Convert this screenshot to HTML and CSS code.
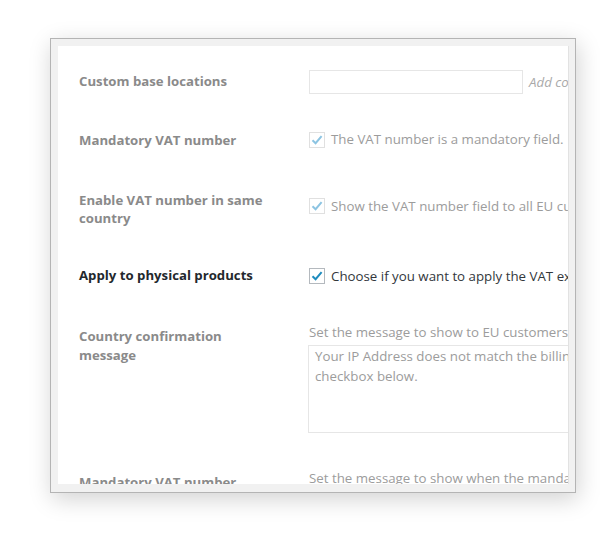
FILE: index.html
```html
<!DOCTYPE html>
<html>
<head>
<meta charset="utf-8">
<link rel="stylesheet" href="styles.css">
</head>
<body>
<div class="frame">
  <div class="panel">
    <div class="row r1">
      <div class="label">Custom base locations</div>
      <div class="field">
        <input class="text" type="text">
        <span class="hint">Add countries</span>
      </div>
    </div>
    <div class="row r2">
      <div class="label">Mandatory VAT number</div>
      <div class="field check">
        <span class="box"><svg viewBox="0 0 16 16" width="16" height="16"><path d="M3.5 8.2 L6.6 11.2 L12.6 4.2" fill="none" stroke-width="2"/></svg></span>
        <span class="ctext">The VAT number is a mandatory field.</span>
      </div>
    </div>
    <div class="row r3">
      <div class="label">Enable VAT number in same country</div>
      <div class="field check">
        <span class="box"><svg viewBox="0 0 16 16" width="16" height="16"><path d="M3.5 8.2 L6.6 11.2 L12.6 4.2" fill="none" stroke-width="2"/></svg></span>
        <span class="ctext">Show the VAT number field to all EU customers</span>
      </div>
    </div>
    <div class="row r4 active">
      <div class="label">Apply to physical products</div>
      <div class="field check">
        <span class="box"><svg viewBox="0 0 16 16" width="16" height="16"><path d="M3.5 8.2 L6.6 11.2 L12.6 4.2" fill="none" stroke-width="2"/></svg></span>
        <span class="ctext">Choose if you want to apply the VAT exemption</span>
      </div>
    </div>
    <div class="row r5">
      <div class="label">Country confirmation message</div>
      <div class="field">
        <div class="desc">Set the message to show to EU customers</div>
        <div class="area">Your IP Address does not match the billing<br>checkbox below.</div>
      </div>
    </div>
    <div class="row r6">
      <div class="label">Mandatory VAT number</div>
      <div class="field">
        <div class="desc">Set the message to show when the mandatory</div>
      </div>
    </div>
  </div>
</div>
</body>
</html>
```
FILE: styles.css
```css
html, body { margin: 0; padding: 0; background: #fff; }
body { width: 600px; height: 535px; overflow: hidden; font-family: "Open Sans", "Noto Sans", sans-serif; font-size: 13.3px; }
.frame {
  margin: 38px 0 0 50px;
  width: 511px;
  height: 438px;
  padding: 7px 6px 8px 7px;
  background: #f1f1f1;
  border: 1px solid #b4b4b4;
  box-shadow: 2px 6px 22px rgba(0,0,0,0.18);
}
.panel {
  width: 511px;
  height: 438px;
  background: #fff;
  overflow: hidden;
  padding-left: 21px;
  box-sizing: border-box;
  border-right: 1px solid #e2e2e2;
}
.row { display: flex; align-items: flex-start; }
.label { width: 230px; flex: none; font-weight: 700; font-size: 13.2px; color: #8a8a8a; padding-right: 36px; box-sizing: border-box; line-height: 19px; }
.field { flex: none; width: 400px; color: #9c9c9c; display: flex; align-items: flex-start; }
.active .label { color: #23282d; }
.active .field { color: #32373c; }
.r1 { height: 64px; }
.r1 .label { padding-top: 26px; }
.r1 .field { padding-top: 24px; align-items: center; }
.text { width: 214px; height: 24px; box-sizing: border-box; border: 1px solid #e6e6e6; margin: 0; padding: 0; background: #fff; }
.hint { font-style: italic; margin-left: 6px; color: #a9a9a9; }
.check .box { width: 16px; height: 16px; box-sizing: border-box; border: 1px solid #e0e0e0; position: relative; flex: none; }
.check .box svg { position: absolute; left: -1px; top: -1px; stroke: #8cc4e2; }
.active .check .box { border-color: #b4b9be; }
.active .check .box svg { stroke: #1e8cbe; }
.ctext { margin-left: 6px; line-height: 20px; white-space: nowrap; }
.r2 { height: 60px; }
.r2 .label { padding-top: 21px; }
.r2 .field { padding-top: 22px; }
.r2 .ctext { margin-top: -3px; }
.r3 { height: 75px; }
.r3 .label { padding-top: 21px; line-height: 18px; }
.r3 .field { padding-top: 28px; }
.r3 .ctext { margin-top: -2px; }
.r4 { height: 60px; }
.r4 .label { padding-top: 21px; }
.r4 .field { padding-top: 23px; }
.r4 .ctext { margin-top: -2px; }
.r5 { height: 150px; }
.r5 .label { padding-top: 22px; }
.r5 .field { padding-top: 17px; flex-direction: column; }
.desc { line-height: 20px; white-space: nowrap; }
.area { margin-left: -1px; margin-top: 3px; width: 300px; height: 88px; box-sizing: border-box; border: 1px solid #e6e6e6; padding: 0 6px; line-height: 20px; white-space: nowrap; }
.r6 .label { padding-top: 18px; }
.r6 .field { padding-top: 13px; }
```
